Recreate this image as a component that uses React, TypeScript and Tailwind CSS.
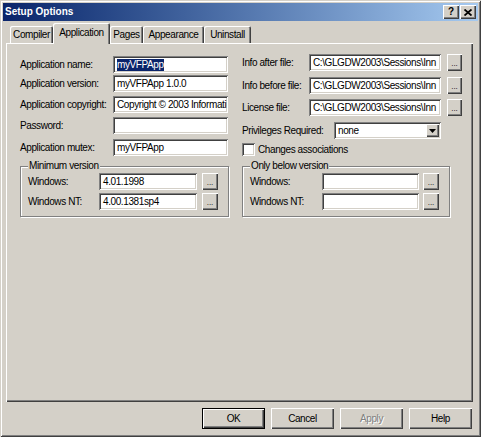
import React from "react";

const raised =
  "bg-[#d4d0c8] shadow-[inset_1px_1px_0_#ffffff,inset_-1px_-1px_0_#404040,inset_-2px_-2px_0_#808080]";
const sunken =
  "bg-white shadow-[inset_1px_1px_0_#808080,inset_-1px_-1px_0_#ffffff,inset_2px_2px_0_#404040,inset_-2px_-2px_0_#d4d0c8]";

function TextBox({ value, width, selected }: { value?: string; width: string; selected?: boolean }) {
  return (
    <div className={`${sunken} ${width} h-[17px] flex items-center pl-[4px] pr-[1px] overflow-hidden whitespace-nowrap`}>
      {selected ? <span className="bg-[#0a246a] text-white leading-[12px]">{value}</span> : value}
    </div>
  );
}

function Dots({ className }: { className: string }) {
  return (
    <div className={`${raised} ${className} flex items-end justify-center pb-[4px] text-[8px] leading-[6px] tracking-normal`}>
      ...
    </div>
  );
}

function GroupBox({ title, className, children }: { title: string; className: string; children: React.ReactNode }) {
  return (
    <fieldset
      className={`border border-[#808080] shadow-[inset_1px_1px_0_#ffffff,1px_1px_0_#ffffff] pl-[7px] pr-[2px] pb-[6px] ${className}`}
    >
      <legend className="px-[1px] leading-[12px] bg-[#d4d0c8]">{title}</legend>
      {children}
    </fieldset>
  );
}

function Tab({ label, width, active }: { label: string; width: string; active?: boolean }) {
  if (active) {
    return (
      <div
        className={`${width} h-[21px] -mb-[1px] relative z-10 bg-[#d4d0c8] rounded-t-[2px] flex items-center justify-center pb-[2px] shadow-[inset_1px_1px_0_#ffffff,inset_-1px_0_0_#404040,inset_-2px_0_0_#808080]`}
      >
        {label}
      </div>
    );
  }
  return (
    <div
      className={`${width} h-[17px] rounded-t-[2px] flex items-center justify-center shadow-[inset_1px_1px_0_#ffffff,inset_-1px_0_0_#404040,inset_-2px_0_0_#808080]`}
    >
      {label}
    </div>
  );
}

function PushButton({ label, isDefault, disabled }: { label: string; isDefault?: boolean; disabled?: boolean }) {
  const text = disabled ? "text-[#808080] [text-shadow:1px_1px_0_#ffffff]" : "text-black";
  if (isDefault) {
    return (
      <div className="w-[63px] h-[21px] border border-black">
        <div className={`${raised} h-full flex items-center justify-center ${text}`}>{label}</div>
      </div>
    );
  }
  return <div className={`${raised} w-[63px] h-[21px] flex items-center justify-center ${text}`}>{label}</div>;
}

export default function App() {
  return (
    <div className="w-[481px] h-[437px] bg-[#d4d0c8] p-[3px] flex flex-col font-['Liberation_Sans',Arial,sans-serif] text-[10px] leading-[12px] tracking-[-0.4px] text-black shadow-[inset_1px_1px_0_#d4d0c8,inset_-1px_-1px_0_#404040,inset_2px_2px_0_#ffffff,inset_-2px_-2px_0_#808080]">
      {/* title bar */}
      <div className="h-[18px] bg-linear-to-r from-[#0a246a] to-[#a6caf0] flex items-center pl-[2px] pr-[2px]">
        <span className="flex-1 text-white font-bold tracking-normal">Setup Options</span>
        <div className={`${raised} w-[16px] h-[14px] flex items-center justify-center font-bold text-[10px] tracking-normal`}>
          ?
        </div>
        <div className={`${raised} w-[16px] h-[14px] ml-[1px] flex items-center justify-center`}>
          <svg width="8" height="7" viewBox="0 0 8 7">
            <path d="M0.5 0.5L7.5 6.5M7.5 0.5L0.5 6.5" stroke="#000" strokeWidth="1.8" />
          </svg>
        </div>
      </div>

      <div className="flex flex-col pl-[3px] pr-[5px]">
        {/* tabs */}
        <div className="h-[22px] flex items-end pl-[4px]">
          <Tab label="Compiler" width="w-[43px]" />
          <Tab label="Application" width="w-[57px]" active />
          <Tab label="Pages" width="w-[33px]" />
          <Tab label="Appearance" width="w-[61px]" />
          <Tab label="Uninstall" width="w-[47px]" />
        </div>

        {/* panel */}
        <div className="h-[359px] flex pl-[14px] shadow-[inset_1px_1px_0_#ffffff,inset_-1px_-1px_0_#404040,inset_-2px_-2px_0_#808080]">
          {/* left column */}
          <div className="w-[209px] flex flex-col pt-[13px]">
            <div className="flex items-center h-[17px]">
              <span className="w-[93px]">Application name:</span>
              <TextBox value="myVFPApp" width="w-[115px]" selected />
            </div>
            <div className="flex items-center h-[17px] mt-[2px]">
              <span className="w-[93px]">Application version:</span>
              <TextBox value="myVFPApp 1.0.0" width="w-[115px]" />
            </div>
            <div className="flex items-center h-[17px] mt-[4px]">
              <span className="w-[93px] whitespace-nowrap">Application copyright:</span>
              <TextBox value="Copyright © 2003 Informati" width="w-[115px]" />
            </div>
            <div className="flex items-center h-[17px] mt-[4px]">
              <span className="w-[93px]">Password:</span>
              <TextBox width="w-[115px]" />
            </div>
            <div className="flex items-center h-[17px] mt-[5px]">
              <span className="w-[93px]">Application mutex:</span>
              <TextBox value="myVFPApp" width="w-[115px]" />
            </div>

            <GroupBox title="Minimum version" className="w-[209px] mt-[4px]">
              <div className="flex items-center h-[17px] mt-[1px]">
                <span className="w-[71px]">Windows:</span>
                <TextBox value="4.01.1998" width="w-[98px]" />
                <Dots className="ml-[5px] w-[16px] h-[17px]" />
              </div>
              <div className="flex items-center h-[17px] mt-[3px]">
                <span className="w-[71px]">Windows NT:</span>
                <TextBox value="4.00.1381sp4" width="w-[98px]" />
                <Dots className="ml-[5px] w-[16px] h-[17px]" />
              </div>
            </GroupBox>
          </div>

          {/* right column */}
          <div className="w-[220px] ml-[13px] flex flex-col pt-[11px]">
            <div className="flex items-center h-[17px]">
              <span className="w-[67px]">Info after file:</span>
              <TextBox value="C:\GLGDW2003\Sessions\Inn" width="w-[132px]" />
              <Dots className="ml-[6px] w-[15px] h-[17px]" />
            </div>
            <div className="flex items-center h-[17px] mt-[6px]">
              <span className="w-[67px]">Info before file:</span>
              <TextBox value="C:\GLGDW2003\Sessions\Inn" width="w-[132px]" />
              <Dots className="ml-[6px] w-[15px] h-[17px]" />
            </div>
            <div className="flex items-center h-[17px] mt-[5px]">
              <span className="w-[67px]">License file:</span>
              <TextBox value="C:\GLGDW2003\Sessions\Inn" width="w-[132px]" />
              <Dots className="ml-[6px] w-[15px] h-[17px]" />
            </div>
            <div className="flex items-center h-[17px] mt-[6px]">
              <span className="w-[92px]">Privileges Required:</span>
              <div className={`${sunken} w-[107px] h-[17px] flex items-center p-[2px] pl-[4px]`}>
                <span className="flex-1">none</span>
                <div className={`${raised} w-[13px] h-full flex items-center justify-center`}>
                  <svg width="7" height="4" viewBox="0 0 7 4">
                    <path d="M0 0H7L3.5 4Z" fill="#000" />
                  </svg>
                </div>
              </div>
            </div>
            <div className="flex items-center h-[13px] mt-[4px]">
              <div className={`${sunken} w-[13px] h-[13px]`} />
              <span className="ml-[3px]">Changes associations</span>
            </div>

            <GroupBox title="Only below version" className="w-[208px] mt-[4px]">
              <div className="flex items-center h-[17px] mt-[1px]">
                <span className="w-[72px]">Windows:</span>
                <TextBox width="w-[97px]" />
                <Dots className="ml-[4px] w-[16px] h-[17px]" />
              </div>
              <div className="flex items-center h-[17px] mt-[3px]">
                <span className="w-[72px]">Windows NT:</span>
                <TextBox width="w-[97px]" />
                <Dots className="ml-[4px] w-[16px] h-[17px]" />
              </div>
            </GroupBox>
          </div>
        </div>

        {/* dialog buttons */}
        <div className="flex justify-end gap-[6px] mt-[6px] pr-[1px]">
          <PushButton label="OK" isDefault />
          <PushButton label="Cancel" />
          <PushButton label="Apply" disabled />
          <PushButton label="Help" />
        </div>
      </div>
    </div>
  );
}
